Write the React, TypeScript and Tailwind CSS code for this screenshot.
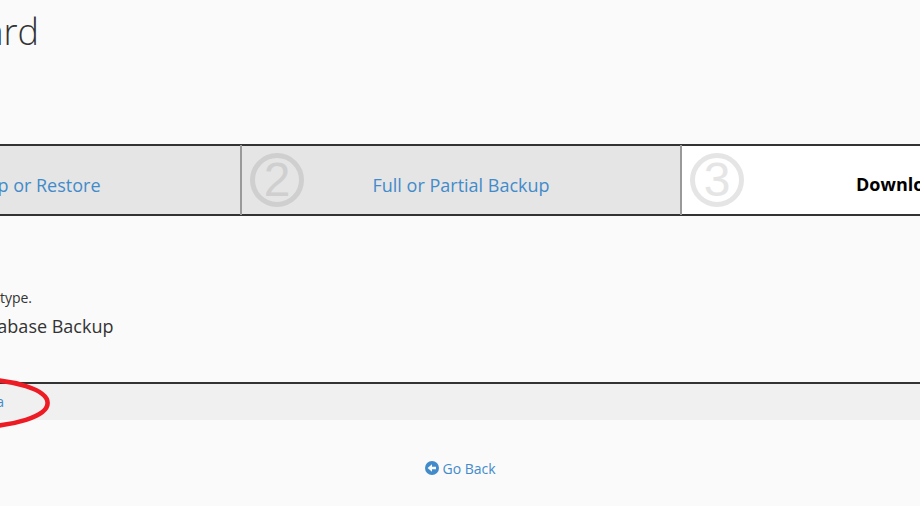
const font = "font-['Open_Sans','Noto_Sans',sans-serif]";

function StepNumber({ value, tone }: { value: string; tone: string }) {
  return (
    <span
      className={`flex size-[54px] shrink-0 items-center justify-center rounded-full border-[5.5px] font-['Liberation_Sans',Arial,sans-serif] text-[48px] leading-[54px] ${tone}`}
    >
      {value}
    </span>
  );
}

export default function App() {
  return (
    <div className={`relative flex h-[506px] w-[920px] flex-col overflow-hidden bg-[#fafafa] text-[#333] ${font}`}>
      <h1 className="flex h-[144px] w-[39px] justify-end pt-[6px] text-[36px] leading-[52px] font-light whitespace-nowrap">
        ard
      </h1>

      <nav className="flex h-[72px] shrink-0 border-y-2 border-[#333] text-[18px] leading-6 whitespace-nowrap text-[#428bca]">
        <div className="-my-px flex w-[242px] shrink-0 border-r-2 border-[#999]">
          <div className="my-px flex w-[240px] bg-[#e5e5e5] pt-[27px]">
            <a className="flex w-[100.5px] justify-end">p or Restore</a>
          </div>
        </div>
        <div className="-my-px flex w-[440px] shrink-0 border-r-2 border-[#999]">
          <div className="my-px flex w-[438px] bg-[#e5e5e5] pt-[7px] pl-2">
            <StepNumber value="2" tone="border-[#cfcfcf] text-[#cfcfcf]" />
            <a className="ml-[68.5px] pt-5">Full or Partial Backup</a>
          </div>
        </div>
        <div className="flex w-[238px] overflow-hidden bg-white pt-[7px] pl-2">
          <StepNumber value="3" tone="border-[#e5e5e5] text-[#e5e5e5]" />
          <span className="ml-[112px] pt-[19px] font-bold text-black">Download</span>
        </div>
      </nav>

      <section className="flex h-[166px] shrink-0 flex-col pt-[72px] whitespace-nowrap">
        <p className="flex h-5 w-[32px] justify-end text-[14px] leading-5">type.</p>
        <p className="mt-[6px] flex h-6 w-[113.5px] justify-end text-[18px] leading-6">abase Backup</p>
      </section>

      <div className="h-[38px] shrink-0 border-t-2 border-[#333] bg-[#f0f0f0] pt-2">
        <a className="flex w-1 justify-end text-[14px] leading-5 text-[#428bca]">a</a>
      </div>

      <footer className="flex pt-[39px] pl-[425px] text-[14px] leading-5 text-[#428bca]">
        <svg className="mt-[2px] mr-[3.5px] size-[14px]" viewBox="0 0 14 14">
          <circle cx="7" cy="7" r="7" fill="currentColor" />
          <path d="M2.6 7 7 3.2V5.7h4v2.6H7v2.5Z" fill="#fafafa" />
        </svg>
        <a>Go Back</a>
      </footer>

      <svg className="absolute top-[370px] left-0 h-[70px] w-[60px]" viewBox="0 0 60 70">
        <ellipse cx="-26.4" cy="33" rx="74" ry="23.8" fill="none" stroke="#ed1c24" strokeWidth="4.6" />
      </svg>
    </div>
  );
}
